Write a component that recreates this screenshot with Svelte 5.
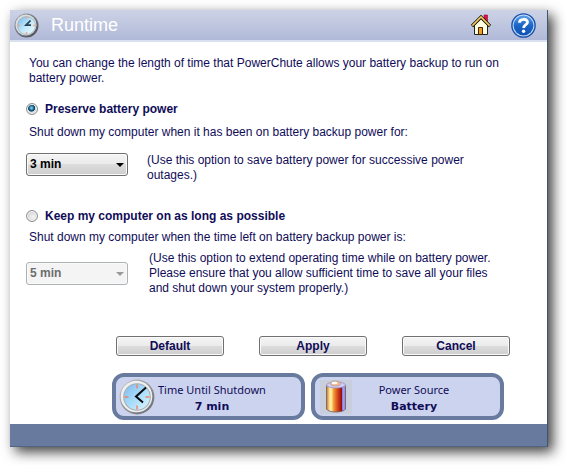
<script>
  let mode = $state('preserve');
  let preserveTime = $state('3 min');
  let keepTime = $state('5 min');
  const times = ['1 min', '3 min', '5 min', '7 min', '10 min'];
</script>

{#snippet arrow()}
  <svg class="arrow" width="8" height="4" viewBox="0 0 8 4" aria-hidden="true">
    <path d="M0 0h8L4 4z" fill="currentColor" />
  </svg>
{/snippet}

<div class="page">
  <main class="window">
    <header>
      <svg width="25" height="25" viewBox="0 0 25 25" aria-hidden="true">
        <defs>
          <linearGradient id="head-rim" x1="0" y1="0" x2="1" y2="1">
            <stop offset="0" stop-color="#a4a8ae" />
            <stop offset="1" stop-color="#44464c" />
          </linearGradient>
          <linearGradient id="head-face" x1="0" y1="0" x2="1" y2="1">
            <stop offset="0" stop-color="#6fb4ea" />
            <stop offset=".5" stop-color="#bfe8fb" />
            <stop offset="1" stop-color="#f0fcff" />
          </linearGradient>
        </defs>
        <circle cx="12.5" cy="12.5" r="12" fill="url(#head-rim)" />
        <circle cx="12" cy="12" r="10.5" fill="#dcdfe2" />
        <circle cx="12.5" cy="12.5" r="9" fill="url(#head-face)" stroke="#a4b0bc" stroke-width=".8" />
        <path d="M12.5 4v2M12.5 19v2M4 12.5h2M19 12.5h2" stroke="#f4a888" stroke-width="1.5" />
        <path d="M16.5 7.5L12 12.2h5" fill="none" stroke="#284454" stroke-width="1.8" />
      </svg>
      <h1>Runtime</h1>
      <a href="#home" aria-label="Home">
        <svg width="20" height="22" viewBox="0 0 20 22" aria-hidden="true">
          <path d="M13 1h3.500v9H13z" fill="#e01040" stroke="#98082c" stroke-width=".6" />
          <path d="M3.500 11L10 4.500l6.500 6.500v9.500h-13z" fill="#fffde0" stroke="#222" />
          <path d="M1 12L10 3l9 9" fill="none" stroke="#111" stroke-width="3.200" />
          <path d="M1.400 11.600L10 3l8.600 8.600" fill="none" stroke="#f8cc58" stroke-width="1.600" />
          <path d="M7.500 13.500h4v7h-4z" fill="#f0a020" stroke="#3c2400" />
        </svg>
      </a>
      <a href="#help" aria-label="Help">
        <svg width="25" height="25" viewBox="0 0 25 25" aria-hidden="true">
          <defs>
            <linearGradient id="help-fill" x1="0" y1="0" x2="0" y2="1">
              <stop offset="0" stop-color="#5b9de8" />
              <stop offset=".5" stop-color="#1b66c8" />
              <stop offset="1" stop-color="#0f50b4" />
            </linearGradient>
          </defs>
          <circle cx="12.5" cy="12.5" r="11.6" fill="#c4dcf8" stroke="#1550a8" stroke-width="1.4" />
          <circle cx="12.5" cy="12.5" r="9.9" fill="url(#help-fill)" />
          <path d="M8.500 9.800C8.500 5.200 16.500 5.200 16.500 9.200c0 2.800-3.900 2.800-3.900 5.800" fill="none" stroke="#fff" stroke-width="2.800" />
          <circle cx="12.6" cy="18.200" r="1.700" fill="#fff" />
        </svg>
      </a>
    </header>

    <form onsubmit={(e) => e.preventDefault()}>
      <p class="text intro">You can change the length of time that PowerChute allows your battery backup to run on battery power.</p>

      <section>
        <label class="choice">
          <input type="radio" name="mode" value="preserve" bind:group={mode} />
          Preserve battery power
        </label>
        <label class="text first" for="preserve-time">Shut down my computer when it has been on battery backup power for:</label>
        <div class="row top">
          <div class="select">
            <select id="preserve-time" bind:value={preserveTime} disabled={mode !== 'preserve'}>
              {#each times as t}<option>{t}</option>{/each}
            </select>
            {@render arrow()}
          </div>
          <p>(Use this option to save battery power for successive power outages.)</p>
        </div>
      </section>

      <section>
        <label class="choice">
          <input type="radio" name="mode" value="keep" bind:group={mode} />
          Keep my computer on as long as possible
        </label>
        <label class="text" for="keep-time">Shut down my computer when the time left on battery backup power is:</label>
        <div class="row">
          <div class="select">
            <select id="keep-time" bind:value={keepTime} disabled={mode !== 'keep'}>
              {#each times as t}<option>{t}</option>{/each}
            </select>
            {@render arrow()}
          </div>
          <p>(Use this option to extend operating time while on battery power. Please ensure that you allow sufficient time to save all your files and shut down your system properly.)</p>
        </div>
      </section>

      <div class="buttons">
        <button type="button">Default</button>
        <button type="submit">Apply</button>
        <button type="button">Cancel</button>
      </div>
    </form>

    <div class="cards">
      <div class="card">
        <svg width="36" height="36" viewBox="0 0 36 36" aria-hidden="true">
          <defs>
            <linearGradient id="card-rim" x1="0" y1="0" x2="1" y2="1">
              <stop offset="0" stop-color="#c4c6ca" />
              <stop offset=".5" stop-color="#94969a" />
              <stop offset="1" stop-color="#66686e" />
            </linearGradient>
            <linearGradient id="card-face" x1="0" y1="0" x2="1" y2="1">
              <stop offset="0" stop-color="#7cbdf0" />
              <stop offset=".5" stop-color="#a9dcfa" />
              <stop offset="1" stop-color="#dcf6ff" />
            </linearGradient>
          </defs>
          <circle cx="18" cy="18" r="17.4" fill="url(#card-rim)" />
          <circle cx="17.5" cy="17.5" r="15.8" fill="#eeeff1" />
          <circle cx="18" cy="18" r="13.8" fill="#a8acb2" />
          <circle cx="18" cy="18" r="12.8" fill="url(#card-face)" />
          <path d="M18 5.500v4M18 26.500v4M5.500 18h4M26.500 18h4" stroke="#f28468" stroke-width="1.500" />
          <path d="M27 8.500L17 17.500l7 6" fill="none" stroke="#0a0a14" stroke-width="2" />
        </svg>
        <div class="status">
          <span>Time Until Shutdown</span>
          <strong>7 min</strong>
        </div>
      </div>
      <div class="card">
        <svg class="battery" width="32" height="34" viewBox="0 0 32 34" aria-hidden="true">
          <defs>
            <linearGradient id="cell">
              <stop offset="0" stop-color="#c8701c" />
              <stop offset=".16" stop-color="#fde08c" />
              <stop offset=".24" stop-color="#fff3b0" />
              <stop offset=".38" stop-color="#f39a34" />
              <stop offset=".6" stop-color="#d0401a" />
              <stop offset=".8" stop-color="#960c08" />
              <stop offset=".84" stop-color="#8c80e8" />
              <stop offset=".93" stop-color="#b4a8f4" />
              <stop offset="1" stop-color="#5c5870" />
            </linearGradient>
          </defs>
          <path d="M0 0h32v34H0z" fill="#c9cedd" />
          <path d="M6.500 5.500v23.500c2 4 17 4 19 0V5.500z" fill="url(#cell)" stroke="#6c6068" stroke-width=".8" />
          <ellipse cx="16" cy="5" rx="9.500" ry="3" fill="#d0ccf8" stroke="#9890c0" stroke-width=".8" />
          <ellipse cx="15.500" cy="3.500" rx="5" ry="2.500" fill="#f0b890" stroke="#a09090" stroke-width=".6" />
          <ellipse cx="14.500" cy="3" rx="3" ry="1.300" fill="#fff" />
        </svg>
        <div class="status source">
          <span>Power Source</span>
          <strong>Battery</strong>
        </div>
      </div>
    </div>

    <footer></footer>
  </main>
</div>

<style>
  :global(body) {
    margin: 0;
    background: #fff;
  }
  .page {
    padding: 10px 18px 18px 10px;
    font: 12px/15px "Liberation Sans", Arial, sans-serif;
    color: #100c58;
  }
  .window {
    background: #fff;
    box-shadow: 5px 5px 12px rgba(0, 0, 0, 0.75);
    border-right: 1px solid #3c566e;
  }
  header {
    display: flex;
    align-items: center;
    height: 30px;
    padding: 0 11px 0 4px;
    gap: 20px;
    background: linear-gradient(#cdd3e6, #b0b9d8);
    border-bottom: 2px solid #dbe0f0;
  }
  header svg {
    display: block;
  }
  h1 {
    flex: 1;
    margin: 0 0 0 -8px;
    font-size: 18px;
    line-height: 20px;
    font-weight: normal;
    color: #fff;
  }
  form {
    padding: 14px 37px 0 16px;
  }
  p {
    margin: 0;
  }
  .text {
    display: block;
    margin-left: 3px;
  }
  .intro {
    margin-bottom: 15px;
  }
  section {
    margin-bottom: 25px;
  }
  .choice {
    display: flex;
    align-items: center;
    gap: 7px;
    height: 16px;
    margin-bottom: 6px;
    font-weight: bold;
  }
  .first {
    margin-top: 8px;
  }
  input {
    appearance: none;
    width: 12px;
    height: 12px;
    margin: 0;
    border: 1px solid #8c8e90;
    border-radius: 50%;
    background: radial-gradient(circle at 60% 60%, #f4f4f4, #c4c6c8);
    box-shadow: inset 0 0 0 1px #f4f4f4;
  }
  input:checked {
    background: radial-gradient(circle at 45% 40%, #8fe0fa 0, #2b86b4 22%, #0c3450 40%, #d4dce2 48%);
  }
  .row {
    display: flex;
    align-items: center;
    gap: 21px;
    margin-top: 6px;
  }
  .top {
    align-items: flex-start;
    gap: 19px;
    margin-top: 13px;
  }
  .row p {
    flex: 1;
  }
  .select {
    position: relative;
    width: 102px;
    color: #000;
  }
  select {
    appearance: none;
    display: block;
    width: 100%;
    height: 23px;
    padding: 0 3px;
    border: 1px solid #707070;
    border-radius: 3px;
    background: linear-gradient(#f4f4f4, #ebebeb 50%, #dcdcdc 50%, #cecece);
    box-shadow: inset 0 0 0 1px #fafafa;
    font: bold 12px/15px "Liberation Sans", Arial, sans-serif;
    color: #000;
  }
  select:disabled {
    border-color: #adb2b5;
    background: #f4f4f4;
    color: #6d6d6d;
    opacity: 1;
  }
  .arrow {
    position: absolute;
    right: 4px;
    top: 10px;
    pointer-events: none;
  }
  select:disabled + .arrow {
    color: #9a9a9a;
  }
  .buttons {
    display: flex;
    justify-content: flex-end;
    gap: 35px;
    margin: 40px 0 17px;
  }
  button {
    width: 108px;
    height: 20px;
    padding: 1px 0 0;
    border: 1px solid #707070;
    border-radius: 3px;
    background: linear-gradient(#f4f4f4, #ebebeb 50%, #dcdcdc 50%, #cecece);
    box-shadow: inset 0 0 0 1px #fafafa;
    font: bold 12px/15px "Liberation Sans", Arial, sans-serif;
    color: #100c58;
  }
  .cards {
    display: flex;
    gap: 6px;
    margin: 0 43px 4px 102px;
  }
  .card {
    display: flex;
    align-items: center;
    box-sizing: border-box;
    flex: 1;
    height: 47px;
    padding: 0 3px;
    border: 4px solid #687b9f;
    border-radius: 12px;
    background: #ccd3ee;
  }
  .battery {
    margin-left: 2px;
  }
  .status {
    display: flex;
    flex-direction: column;
    margin-left: 3px;
    padding-top: 2px;
    text-align: center;
    font: 11px/17px "Noto Sans", sans-serif;
  }
  .source {
    flex: 1;
    padding-right: 24px;
  }
  .status strong {
    font-family: "DejaVu Sans", Verdana, sans-serif;
  }
  footer {
    height: 22px;
    background: #687b9f;
    border-bottom: 1px solid #50657f;
  }
</style>
